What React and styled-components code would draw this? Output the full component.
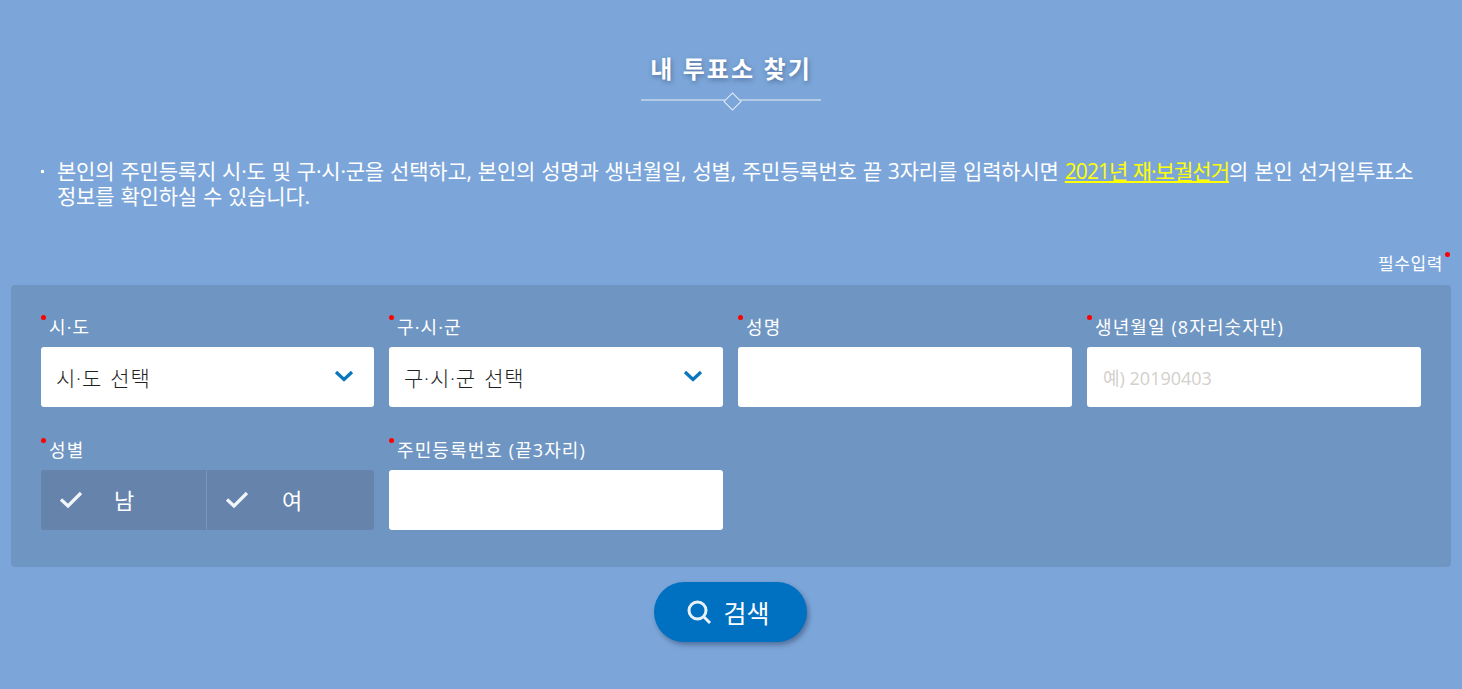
import React from 'react';
import styled, { createGlobalStyle } from 'styled-components';

const GlobalStyle = createGlobalStyle`
  html, body { margin: 0; padding: 0; }
  body {
    background: #7ca6d9;
    font-family: "Open Sans", "Noto Sans CJK KR", "Liberation Sans", sans-serif;
    color: #fff;
  }
  * { box-sizing: border-box; }
`;

const Page = styled.div`
  width: 1462px;
  height: 689px;
  overflow: hidden;
  padding: 49px 11px 0;
`;

const Heading = styled.div`
  display: flex;
  flex-direction: column;
  align-items: center;
`;

const Title = styled.h2`
  margin: 0;
  padding-top: 1px;
  font-size: 24px;
  line-height: 38px;
  font-weight: 700;
  letter-spacing: 2.1px;
  text-shadow: 1px 2px 5px rgba(50, 70, 110, 0.55);
`;

const Rule = styled.div`
  position: relative;
  width: 180px;
  height: 2px;
  margin-top: 11px;
  background: #b4cbe8;
  &::after {
    content: '';
    position: absolute;
    left: 85px;
    top: -4.5px;
    width: 11px;
    height: 11px;
    background: #7ca6d9;
    border: 1px solid #e3ecf7;
    transform: rotate(45deg);
  }
`;

const Notice = styled.ul`
  list-style: none;
  margin: 58px 0 0;
  padding: 0 30px 0 46px;
`;

const NoticeItem = styled.li`
  position: relative;
  font-size: 21px;
  line-height: 25px;
  letter-spacing: -0.2px;
  word-spacing: 0.8px;
  word-break: keep-all;
  &::before {
    content: '';
    position: absolute;
    left: -16px;
    top: 11px;
    width: 3px;
    height: 3px;
    background: #fff;
  }
`;

const Highlight = styled.a`
  color: #ffff00;
  text-decoration: underline;
  letter-spacing: -0.95px;
`;

const RequiredRow = styled.div`
  display: flex;
  justify-content: flex-end;
  margin-top: 43px;
  padding-right: 8px;
`;

const Required = styled.span`
  position: relative;
  font-size: 17px;
  line-height: 24px;
  letter-spacing: 0.6px;
  &::after {
    content: '';
    position: absolute;
    right: -7px;
    top: 0;
    width: 5px;
    height: 5px;
    border-radius: 50%;
    background: #ff0000;
  }
`;

const Panel = styled.div`
  display: grid;
  grid-template-columns: 333px 334px 334px 334px;
  column-gap: 15px;
  row-gap: 31px;
  height: 282px;
  margin-top: 9px;
  padding: 30px;
  align-content: start;
  background: #6f95c2;
  border-radius: 4px;
`;

const Field = styled.div`
  display: flex;
  flex-direction: column;
`;

const Label = styled.label`
  position: relative;
  height: 32px;
  padding-left: 8px;
  font-size: 18px;
  line-height: 25px;
  letter-spacing: 1.1px;
  &::before {
    content: '';
    position: absolute;
    left: 0;
    top: 0;
    width: 5px;
    height: 5px;
    border-radius: 50%;
    background: #ff0000;
  }
`;

const SelectBox = styled.div`
  position: relative;
  height: 60px;
`;

const Select = styled.select`
  appearance: none;
  width: 100%;
  height: 100%;
  padding: 2px 15px 0;
  border: 0;
  border-radius: 3px;
  background: #fff;
  color: #222;
  font-family: inherit;
  font-size: 21px;
  font-weight: 300;
  letter-spacing: 0.8px;
  word-spacing: 2px;
`;

const Arrow = styled.svg`
  position: absolute;
  right: 20px;
  top: 23px;
  width: 20px;
  height: 12px;
  pointer-events: none;
`;

const TextInput = styled.input`
  width: 100%;
  height: 60px;
  padding: 2px 16px 0;
  border: 0;
  border-radius: 3px;
  background: #fff;
  color: #222;
  font-family: inherit;
  font-size: 18px;
  &::placeholder {
    color: #d2d0cc;
    opacity: 1;
  }
`;

const GenderGroup = styled.div`
  display: grid;
  grid-template-columns: 165px 1fr;
  height: 60px;
  border-radius: 3px;
  overflow: hidden;
  background: #6583ab;
`;

const GenderOption = styled.div`
  display: flex;
  align-items: center;
  padding-left: 18px;
  font-size: 22px;
  border-left: ${(p) => (p.$divided ? '1px solid #7496c0' : '0')};
`;

const GenderName = styled.span`
  margin-left: ${(p) => (p.$wide ? '33px' : '31px')};
  line-height: 60px;
`;

const Actions = styled.div`
  display: flex;
  justify-content: center;
  margin-top: 15px;
  padding-right: 1px;
`;

const SearchButton = styled.button`
  display: flex;
  align-items: center;
  justify-content: center;
  gap: 11px;
  width: 153px;
  height: 60px;
  padding: 0 4px 0 0;
  border: 0;
  border-radius: 30px;
  background: #0070c0;
  color: #fff;
  font-family: inherit;
  font-size: 25px;
  box-shadow: 2px 3px 5px rgba(50, 70, 110, 0.55);
`;

const Chevron = () => (
  <Arrow viewBox="0 0 20 12" fill="none">
    <path d="M2 2l8 7.5L18 2" stroke="#0a76bd" strokeWidth="3.2" />
  </Arrow>
);

const Check = () => (
  <svg width="24" height="18" viewBox="0 0 24 18" fill="none">
    <path d="M2 8.5l7 6.5L22 2" stroke="#f2f5f9" strokeWidth="3.2" />
  </svg>
);

const Magnifier = () => (
  <svg width="25" height="25" viewBox="0 0 25 25" fill="none">
    <circle cx="10.5" cy="10.5" r="8.5" stroke="#e8f2fa" strokeWidth="3" />
    <path d="M16.5 16.5l6.5 6.5" stroke="#e8f2fa" strokeWidth="3" />
  </svg>
);

function App() {
  return (
    <Page>
      <GlobalStyle />
      <Heading>
        <Title>내 투표소 찾기</Title>
        <Rule />
      </Heading>
      <Notice>
        <NoticeItem>
          본인의 주민등록지 시·도 및 구·시·군을 선택하고, 본인의 성명과 생년월일, 성별, 주민등록번호 끝 3자리를 입력하시면{' '}
          <Highlight href="#">2021년 재·보궐선거</Highlight>의 본인 선거일투표소 정보를 확인하실 수 있습니다.
        </NoticeItem>
      </Notice>
      <RequiredRow>
        <Required>필수입력</Required>
      </RequiredRow>
      <Panel>
        <Field>
          <Label>시·도</Label>
          <SelectBox>
            <Select defaultValue="">
              <option value="">시·도 선택</option>
            </Select>
            <Chevron />
          </SelectBox>
        </Field>
        <Field>
          <Label>구·시·군</Label>
          <SelectBox>
            <Select defaultValue="">
              <option value="">구·시·군 선택</option>
            </Select>
            <Chevron />
          </SelectBox>
        </Field>
        <Field>
          <Label>성명</Label>
          <TextInput type="text" />
        </Field>
        <Field>
          <Label>생년월일 (8자리숫자만)</Label>
          <TextInput type="text" placeholder="예) 20190403" />
        </Field>
        <Field>
          <Label>성별</Label>
          <GenderGroup>
            <GenderOption>
              <Check />
              <GenderName>남</GenderName>
            </GenderOption>
            <GenderOption $divided>
              <Check />
              <GenderName $wide>여</GenderName>
            </GenderOption>
          </GenderGroup>
        </Field>
        <Field>
          <Label>주민등록번호 (끝3자리)</Label>
          <TextInput type="text" />
        </Field>
      </Panel>
      <Actions>
        <SearchButton>
          <Magnifier />
          검색
        </SearchButton>
      </Actions>
    </Page>
  );
}

export default App;
